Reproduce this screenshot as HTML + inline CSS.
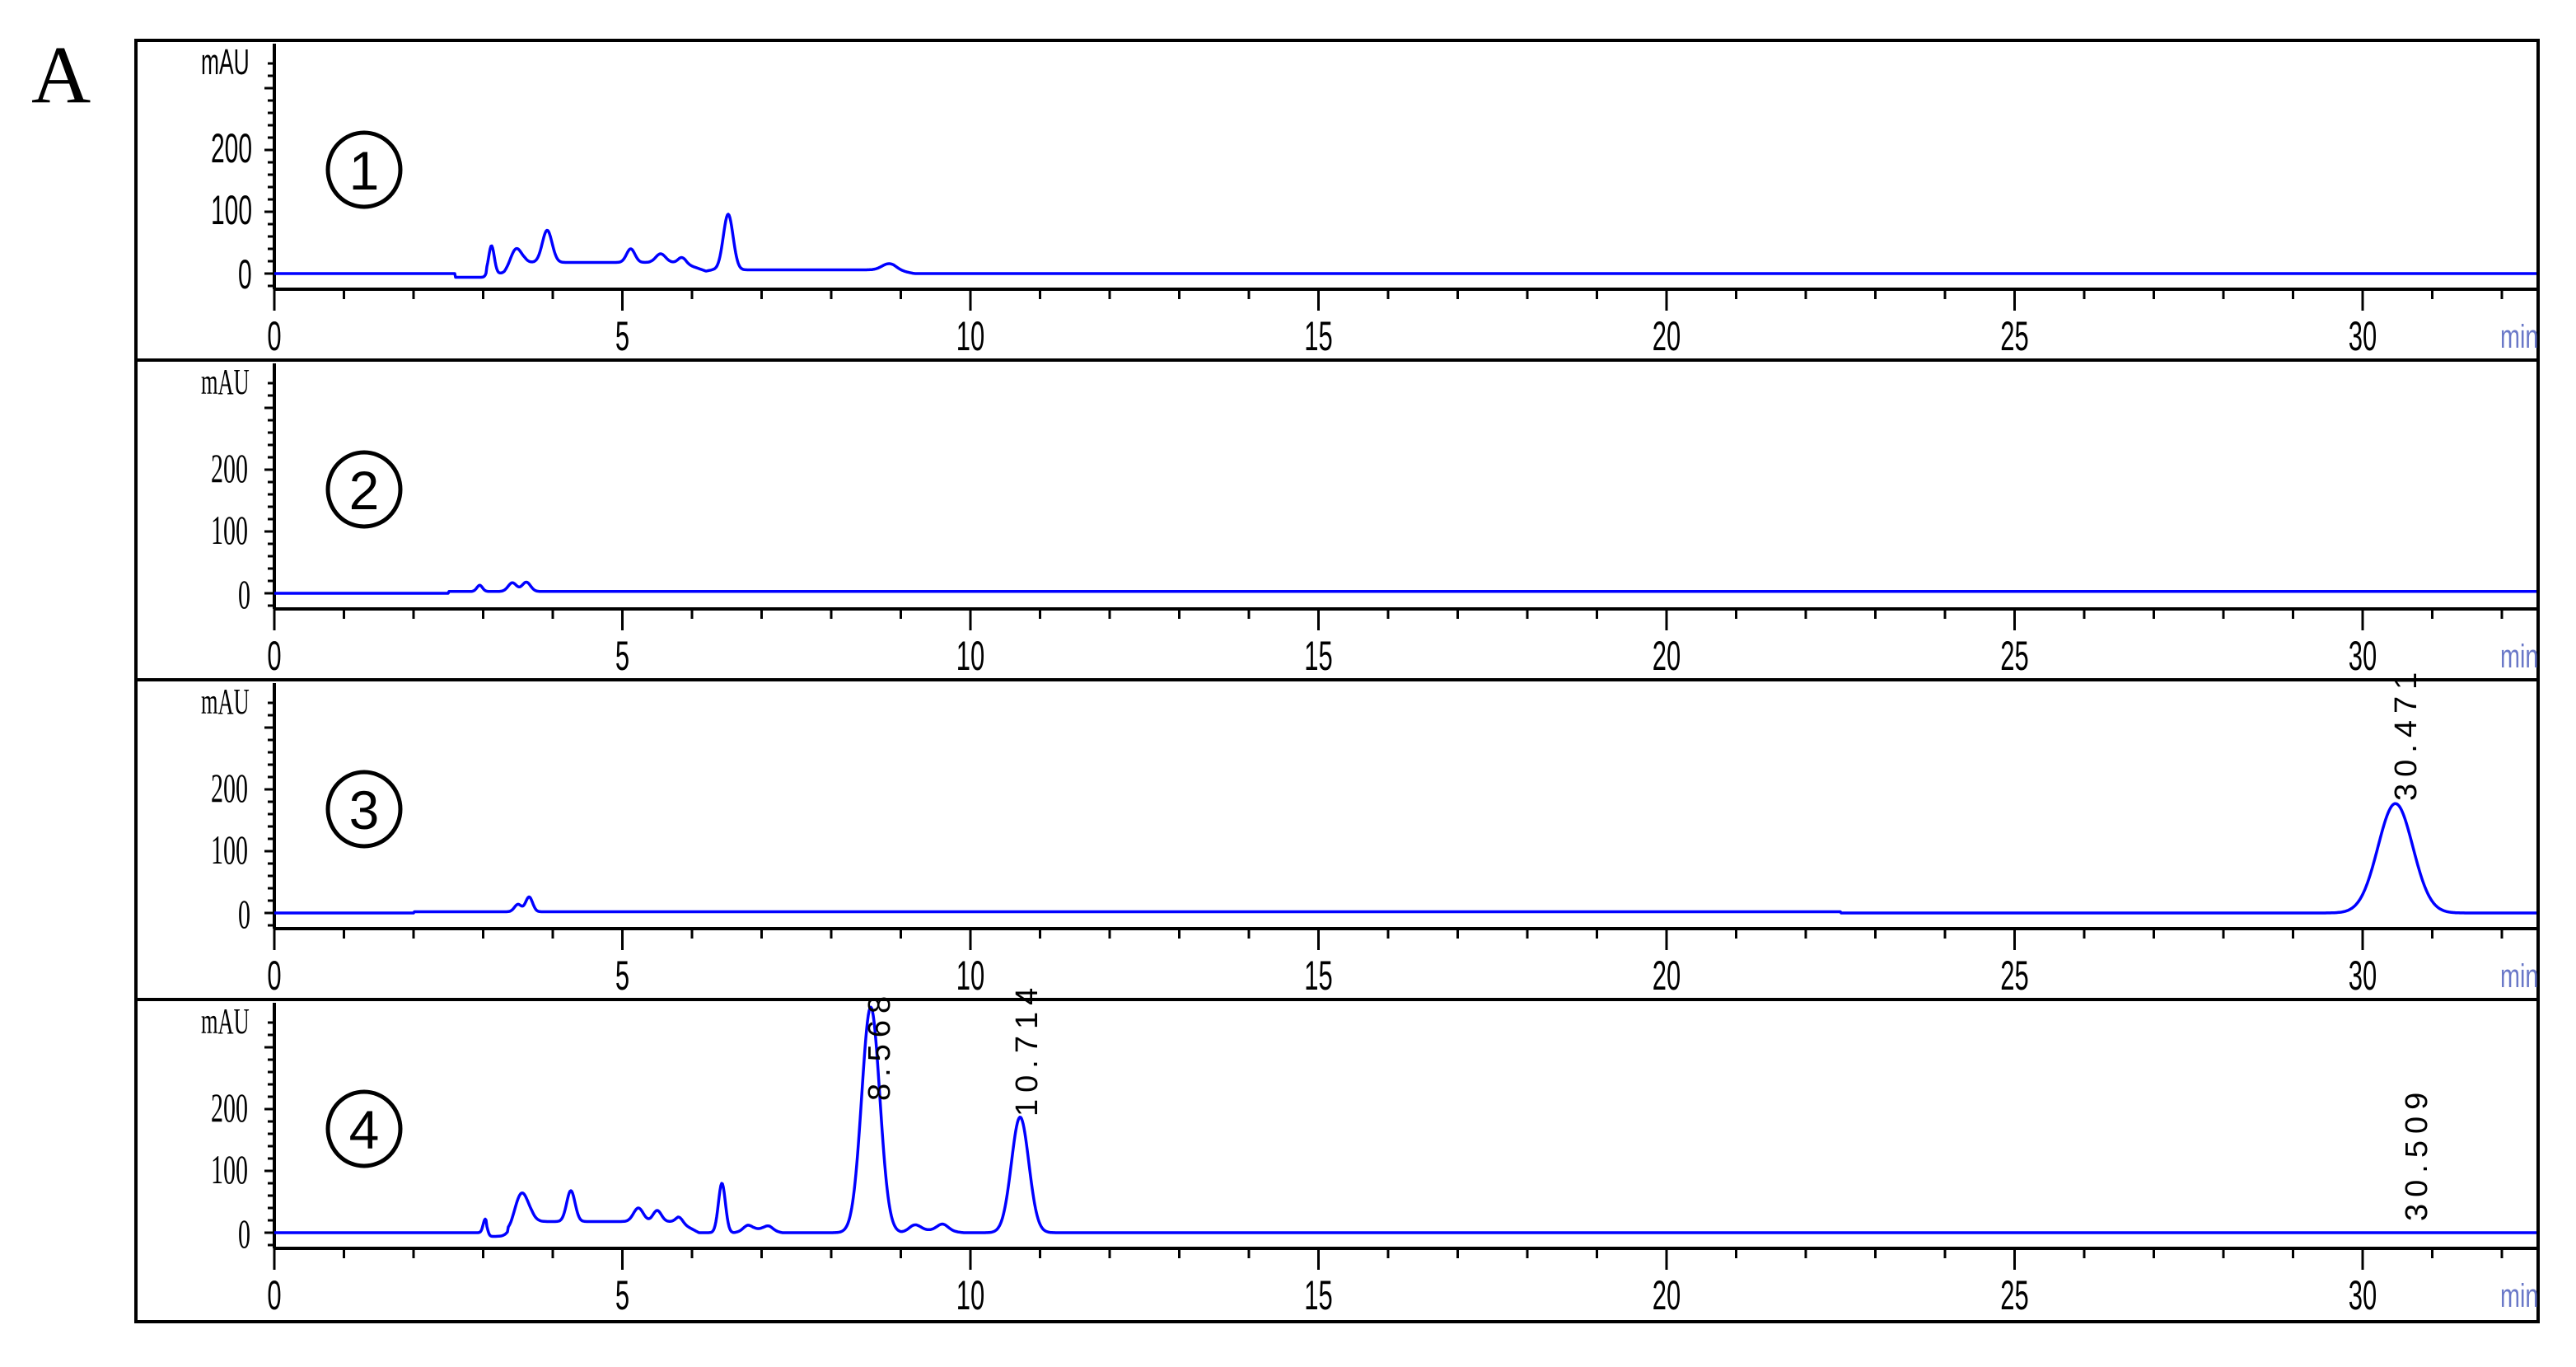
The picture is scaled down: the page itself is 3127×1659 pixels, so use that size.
<!DOCTYPE html>
<html><head><meta charset="utf-8"><style>
html,body{margin:0;padding:0;background:#fff;}
body{width:3127px;height:1659px;overflow:hidden;position:relative;}
svg{position:absolute;left:0;top:0;}
</style></head><body>
<svg id="s" width="3127" height="1659" viewBox="0 0 3127 1659" xmlns="http://www.w3.org/2000/svg">
<text x="38" y="124" font-family="Liberation Serif, serif" font-size="100" fill="#000">A</text>
<rect x="165" y="49" width="2916" height="1555" fill="none" stroke="#000" stroke-width="4"/>
<g id="frames" stroke="#000" stroke-width="4" fill="none"></g>
<g id="ticks" stroke="#000" stroke-width="3" fill="none"></g>
<g id="curves" stroke="#0000ff" stroke-width="3.5" fill="none" stroke-linejoin="round"></g>
<g font-family="Liberation Sans, sans-serif" fill="#000">
<g id="p0">
<text x="0" y="90" font-size="44" transform="translate(244,0) scale(0.6,1)">mAU</text>
<text x="0" y="197" font-size="50" transform="translate(256,0) scale(0.6,1)">200</text>
<text x="0" y="272" font-size="50" transform="translate(256,0) scale(0.6,1)">100</text>
<text x="0" y="350" font-size="50" transform="translate(289,0) scale(0.6,1)">0</text>
</g>
</g>
<g id="xl" font-family="Liberation Sans, sans-serif"></g>
</svg>
<script>
var S=document.getElementById('s');
var NS='http://www.w3.org/2000/svg';
function el(tag,attrs,parent,text){var e=document.createElementNS(NS,tag);for(var k in attrs)e.setAttribute(k,attrs[k]);if(text!==undefined)e.textContent=text;(parent||S).appendChild(e);return e;}
var tops=[49,437,825,1213];
var X0=333,PPM=84.5,RIGHT=3081;
var ticks=document.getElementById('ticks'),frames=document.getElementById('frames'),curves=document.getElementById('curves');
tops.forEach(function(t,i){
  if(i>0) el('line',{x1:165,y1:t,x2:RIGHT,y2:t},frames);
  el('line',{x1:X0,y1:t+4,x2:X0,y2:t+302},frames);
  el('line',{x1:X0,y1:t+302,x2:RIGHT,y2:t+302},frames);
  for(var m=-20;m<=340;m+=20){var y=t+283-m*0.75;if(y<t+6)continue;var big=(m%100==0);
    el('line',{x1:X0-(big?12:8),y1:y,x2:X0,y2:y},ticks);}
  for(var k=0;k<=32;k++){var x=X0+k*PPM;var big=(k%5==0);
    el('line',{x1:x,y1:t+302,x2:x,y2:t+(big?328:314)},ticks);}
});
function g(x,c,h,s){return h*Math.exp(-0.5*Math.pow((x-c)/s,2));}
function hump(x,a,b,h){if(x<a||x>b)return 0;return h*Math.min(1,(x-a)/0.3,(b-x)/0.3);}
var fns=[
 function(x){var v=0;if(x>2.6&&x<3.05)v-=6;
   v+=g(x,3.12,45,0.04)+g(x,3.47,30,0.08)+g(x,3.92,52,0.07)+g(x,5.12,22,0.06)+g(x,5.55,14,0.07)+g(x,5.85,8,0.05)+g(x,6.52,90,0.07)+g(x,8.83,10,0.1);
   v+=hump(x,3.3,6.2,18)+hump(x,6.0,9.2,6);return v;},
 function(x){var v=0;if(x>2.5)v+=3;v+=g(x,2.95,10,0.04)+g(x,3.42,14,0.06)+g(x,3.62,15,0.06);return v;},
 function(x){var v=0;if(x>2)v+=2;if(x>22.5)v-=2;v+=g(x,3.5,12,0.05)+g(x,3.66,24,0.05)+g(x,30.471,177,0.25);return v;},
 function(x){var v=0;if(x>3.05&&x<3.35)v-=6;
   v+=g(x,3.03,22,0.03)+g(x,3.55,55,0.1)+g(x,4.26,50,0.06)+g(x,5.23,22,0.07)+g(x,5.5,18,0.06)+g(x,5.82,8,0.05)+g(x,6.43,80,0.05)+g(x,6.8,8,0.06)+g(x,7.1,7,0.06)+g(x,8.568,365,0.13)+g(x,9.2,10,0.08)+g(x,9.6,10,0.08)+g(x,10.714,187,0.125);
   v+=hump(x,3.4,6.1,18)+hump(x,6.6,7.3,6)+hump(x,9.0,9.9,4);return v;}
];
tops.forEach(function(t,i){
  var d='';
  for(var px=X0;px<=RIGHT-2;px+=1){var x=(px-X0)/PPM;var y=t+283-fns[i](x)*0.75;if(y<t+4)y=t+4;d+=(px==X0?'M':'L')+px+' '+y.toFixed(1)+' ';}
  el('path',{d:d},curves);
});
var xl=document.getElementById('xl');
var circ=['1','2','3','4'];
tops.forEach(function(t,i){
  [0,5,10,15,20,25,30].forEach(function(k){
    var x=X0+k*PPM;
    var tx=el('text',{x:0,y:0,'font-size':50,'text-anchor':'middle',fill:'#000',transform:'translate('+x+','+(t+376)+') scale(0.62,1)'},xl);tx.textContent=String(k);
  });
  var mn=el('text',{x:0,y:0,'font-size':40,fill:'#6a78c8',transform:'translate(3035,'+(t+373)+') scale(0.72,1)'},xl);mn.textContent='min';
  if(i>0){var p=document.getElementById('p0').cloneNode(true);p.removeAttribute('id');p.setAttribute('transform','translate(0,'+(t-49)+')');S.appendChild(p);}
  el('ellipse',{cx:442,cy:t+157,rx:44,ry:45,fill:'none',stroke:'#000','stroke-width':5});
  var c=el('text',{x:442,y:t+181,'font-size':66,'text-anchor':'middle','font-family':'Liberation Sans, sans-serif',fill:'#000'});c.textContent=circ[i];
});
</script>
<svg width="3127" height="1659" style="position:absolute;left:0;top:0" xmlns="http://www.w3.org/2000/svg">
<g font-family="Liberation Sans, sans-serif" font-size="38" fill="#000" letter-spacing="8">
<text transform="translate(2933,972) rotate(-90)">30.471</text>
<text transform="translate(1080,1336) rotate(-90)">8.568</text>
<text transform="translate(1259,1355) rotate(-90)">10.714</text>
<text transform="translate(2946,1482) rotate(-90)">30.509</text>
</g>
</svg>
</body></html>
